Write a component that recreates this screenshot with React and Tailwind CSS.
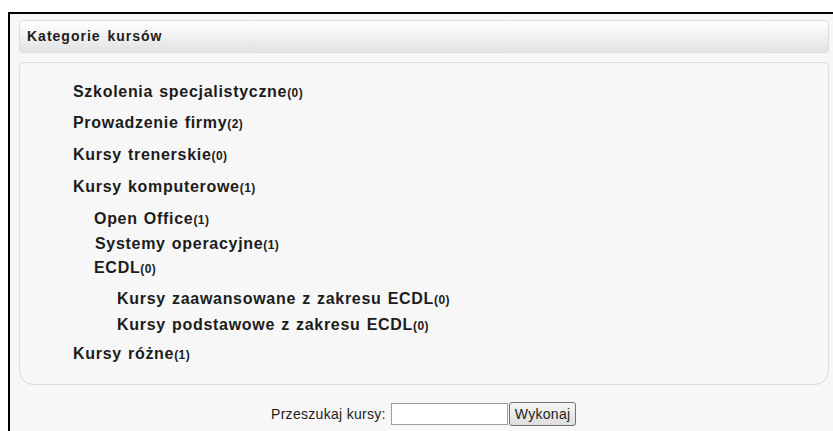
const CATEGORIES = [
  { name: "Szkolenia specjalistyczne", count: 0, depth: 0, gap: "mt-0" },
  { name: "Prowadzenie firmy", count: 2, depth: 0, gap: "mt-[13px]" },
  { name: "Kursy trenerskie", count: 0, depth: 0, gap: "mt-[14px]" },
  { name: "Kursy komputerowe", count: 1, depth: 0, gap: "mt-[14px]" },
  { name: "Open Office", count: 1, depth: 1, gap: "mt-[14px]" },
  { name: "Systemy operacyjne", count: 1, depth: 1, gap: "mt-[7px]", nudge: true },
  { name: "ECDL", count: 0, depth: 1, gap: "mt-[6px]" },
  { name: "Kursy zaawansowane z zakresu ECDL", count: 0, depth: 2, gap: "mt-[13px]" },
  { name: "Kursy podstawowe z zakresu ECDL", count: 0, depth: 2, gap: "mt-[8px]" },
  { name: "Kursy różne", count: 1, depth: 0, gap: "mt-[11px]" },
];

const INDENT = ["pl-[53px]", "pl-[74px]", "pl-[97px]"];

export default function App() {
  return (
    <div className="h-[431px] w-[833px] overflow-hidden bg-white [font-family:'Liberation_Sans',Arial,sans-serif] text-[#1c1c1c]">
      <div className="ml-2 mt-3 h-[420px] border-l-2 border-t-2 border-black bg-[#f7f7f7] pl-[9px] pr-1 pt-[6px]">
        <div className="flex h-[33px] items-center rounded-[4px] border border-[#dcdcdc] bg-gradient-to-b from-white to-[#e2e2e2] px-[7px] text-[14px] font-bold tracking-[1px] [word-spacing:2px]">
          Kategorie kursów
        </div>

        <div className="mt-[9px] h-[323px] rounded-b-[14px] rounded-t-[4px] border border-[#dcdcdc] bg-[#f7f7f7] pt-[20px]">
          {CATEGORIES.map((c) => (
            <div
              key={c.name}
              className={`${c.gap} ${INDENT[c.depth]} ${c.nudge ? "ml-[1px]" : ""} h-[18px] whitespace-nowrap leading-[18px]`}
            >
              <span className="text-[16px] font-bold tracking-[0.7px] [word-spacing:1px]">{c.name}</span>
              <span className="text-[12px] font-bold tracking-[0.4px]">({c.count})</span>
            </div>
          ))}
        </div>

        <div className="mt-[17px] flex items-center pl-[252px] text-[14px] tracking-[0.3px]">
          <span>Przeszukaj kursy:</span>
          <input
            type="text"
            className="ml-[5px] h-[22px] w-[117px] border border-[#a0a0a0] bg-white"
          />
          <button className="ml-[1px] h-[24px] rounded-[3px] border border-[#707070] bg-gradient-to-b from-[#f6f6f6] to-[#dedede] px-[5px] text-[14px]">
            Wykonaj
          </button>
        </div>
      </div>
    </div>
  );
}
